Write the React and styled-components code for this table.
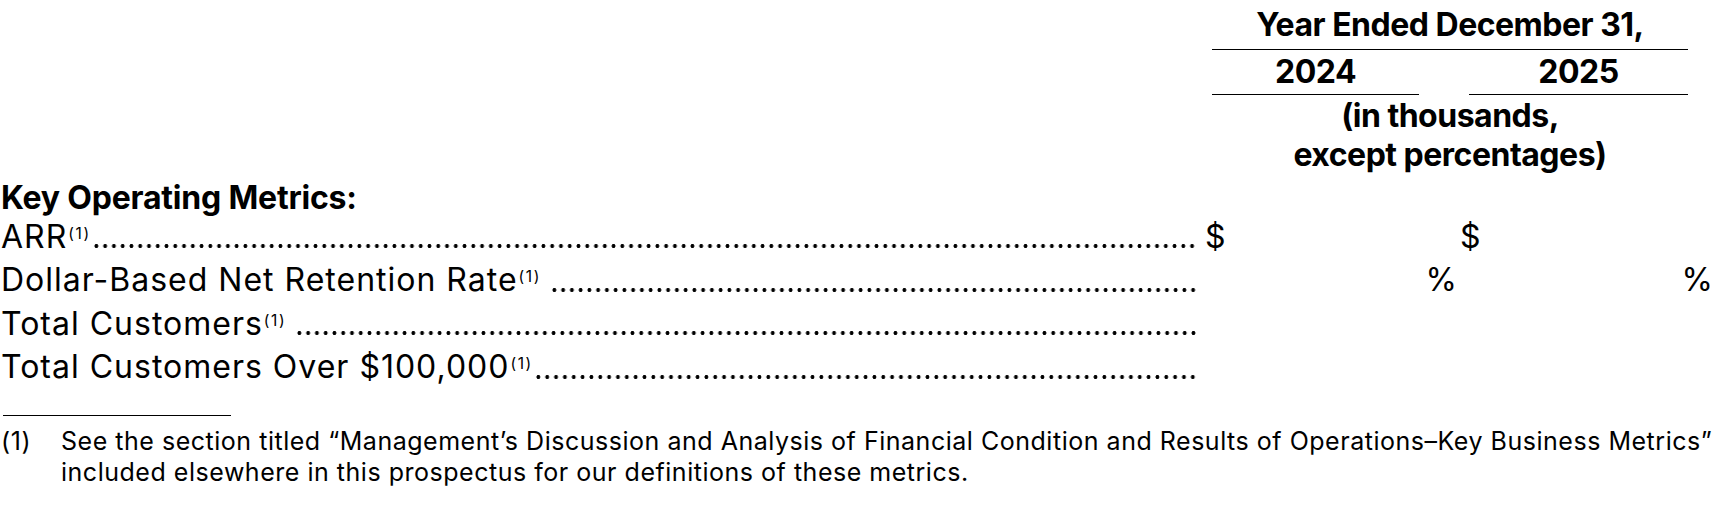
import React from "react";
import styled, { createGlobalStyle } from "styled-components";

const GlobalStyle = createGlobalStyle`
  html, body { margin: 0; padding: 0; background: #ffffff; }
  body {
    font-family: "Inter", "Noto Sans", sans-serif;
    color: #000000;
    -webkit-font-smoothing: antialiased;
  }
`;

const Page = styled.div`
  width: 1720px;
  padding: 5px 0 0 1px;
  box-sizing: border-box;
`;

const Table = styled.div`
  display: flex;
  flex-direction: column;
`;

const Row = styled.div`
  display: grid;
  grid-template-columns: 1202px 255px 256px;
  margin-top: ${(p) => p.$top || 0}px;
`;

const HeadCell = styled.div`
  grid-column: ${(p) => p.$span || "auto"};
  margin: 0 ${(p) => p.$mr}px 0 ${(p) => p.$ml}px;
  padding: ${(p) => p.$pt || 0}px 0 ${(p) => p.$pb || 0}px;
  border-bottom: ${(p) => (p.$rule ? "1.5px solid #000" : "none")};
  text-align: center;
  font-size: 32px;
  font-weight: 700;
  line-height: ${(p) => p.$lh}px;
  letter-spacing: -0.5px;
  white-space: nowrap;
`;

const Spacer = styled.div``;

const SectionTitle = styled.div`
  grid-column: 1 / 2;
  font-size: 32px;
  font-weight: 700;
  line-height: 33.5px;
  letter-spacing: -0.2px;
  white-space: nowrap;
`;

const LabelCell = styled.div`
  display: flex;
  align-items: stretch;
  padding-right: 5px;
  font-size: 32px;
  font-weight: 400;
  line-height: 43.5px;
  letter-spacing: 1px;
  white-space: nowrap;
  min-width: 0;
`;

const LabelText = styled.span`
  flex: none;
  margin-right: ${(p) => (p.$gap ? 9 : 1)}px;
`;

const Sup = styled.sup`
  font-size: 15.5px;
  line-height: 0;
  letter-spacing: 1.6px;
  vertical-align: 9px;
  margin-left: 1px;
`;

const Leader = styled.span`
  flex: 1;
  min-width: 0;
  background-image: radial-gradient(circle at center, #000 1.7px, rgba(0, 0, 0, 0) 2.2px);
  background-size: 8.75px 6px;
  background-repeat: space no-repeat;
  background-position: 0 28.6px;
`;

const ValueCell = styled.div`
  display: flex;
  justify-content: space-between;
  align-items: baseline;
  padding: 0 ${(p) => p.$pr}px 0 ${(p) => p.$pl}px;
  font-size: 32px;
  font-weight: 400;
  line-height: 43.5px;
`;

const Sign = styled.span`
  visibility: ${(p) => (p.$show ? "visible" : "hidden")};
`;

const Footnotes = styled.div`
  margin-top: 26px;
`;

const FootRule = styled.div`
  width: 228px;
  margin-left: 2px;
  border-top: 1.2px solid #000;
`;

const Note = styled.div`
  display: flex;
  margin-top: 10px;
  font-size: 25px;
  line-height: 31.5px;
  letter-spacing: 0.52px;
`;

const NoteMark = styled.span`
  flex: none;
  width: 60px;
  letter-spacing: 0.6px;
`;

const NoteText = styled.span`
  flex: 1;
`;

const metrics = [
  { label: "ARR", gap: false, dollar: true, pct: false },
  { label: "Dollar-Based Net Retention Rate", gap: true, dollar: false, pct: true },
  { label: "Total Customers", gap: true, dollar: false, pct: false },
  { label: "Total Customers Over $100,000", gap: false, dollar: false, pct: false },
];

export default function App() {
  return (
    <>
      <GlobalStyle />
      <Page>
        <Table>
          <Row>
            <Spacer />
            <HeadCell $span="2 / 4" $ml={9} $mr={26} $lh={40} $pb={4} $rule>
              Year Ended December 31,
            </HeadCell>
          </Row>
          <Row>
            <Spacer />
            <HeadCell $ml={9} $mr={39} $lh={40} $pt={2} $pb={1.5} $rule>
              2024
            </HeadCell>
            <HeadCell $ml={11} $mr={26} $lh={40} $pt={2} $pb={1.5} $rule>
              2025
            </HeadCell>
          </Row>
          <Row>
            <Spacer />
            <HeadCell $span="2 / 4" $ml={9} $mr={26} $lh={39} $pt={1}>
              (in thousands,
              <br />
              except percentages)
            </HeadCell>
          </Row>
          <Row $top={7.5}>
            <SectionTitle>Key Operating Metrics:</SectionTitle>
          </Row>
          {metrics.map((m) => (
            <Row key={m.label}>
              <LabelCell>
                <LabelText $gap={m.gap}>
                  {m.label}
                  <Sup>(1)</Sup>
                </LabelText>
                <Leader aria-hidden="true" />
              </LabelCell>
              <ValueCell $pl={2} $pr={1}>
                <Sign $show={m.dollar}>$</Sign>
                <Sign $show={m.pct}>%</Sign>
              </ValueCell>
              <ValueCell $pl={2} $pr={1}>
                <Sign $show={m.dollar}>$</Sign>
                <Sign $show={m.pct}>%</Sign>
              </ValueCell>
            </Row>
          ))}
        </Table>
        <Footnotes>
          <FootRule />
          <Note>
            <NoteMark>(1)</NoteMark>
            <NoteText>
              See the section titled “Management’s Discussion and Analysis of Financial Condition and
              Results of Operations–Key Business Metrics” included elsewhere in this prospectus for our
              definitions of these metrics.
            </NoteText>
          </Note>
        </Footnotes>
      </Page>
    </>
  );
}
